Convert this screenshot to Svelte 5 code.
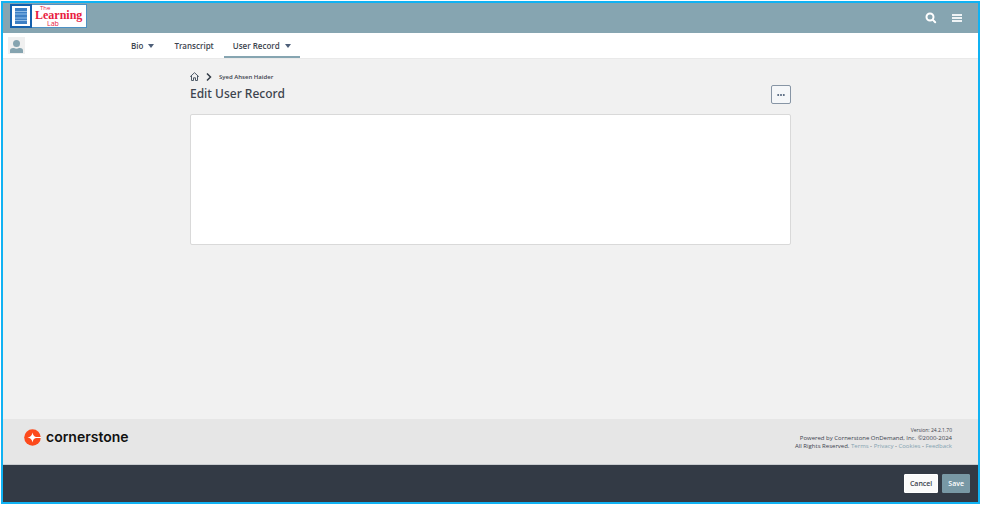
<script>
  const links = ['Terms', 'Privacy', 'Cookies', 'Feedback'];
</script>

<div class="page">
  <header class="top">
    <a class="brand" href="#home" aria-label="The Learning Lab">
      <svg width="78" height="24" viewBox="0 0 78 24">
        <rect x="0.5" y="0.5" width="76" height="23" fill="#fff" stroke="#4d91c4" />
        <rect x="1" y="1" width="20" height="22" fill="#fff" stroke="#1460ad" stroke-width="2" />
        <rect x="5" y="4" width="12" height="16" fill="#3d7fc4" />
        <path d="M5 7.5h12M5 16.5h12" stroke="#8fbbe6" />
        <path d="M5 10h12M5 14h12" stroke="#669fd8" stroke-width="2" />
        <g fill="#e8203f" font-family="'Open Sans', sans-serif">
          <text x="30" y="6" font-size="6">The</text>
          <text x="25" y="15" font-family="'Liberation Serif', serif" font-size="12" font-weight="700">Learning</text>
          <text x="37" y="22" font-size="7">Lab</text>
        </g>
      </svg>
    </a>
    <div class="tools">
      <button class="icon" aria-label="Search">
        <svg width="12" height="12" viewBox="0 0 12 12" fill="none" stroke="#fff" stroke-width="2">
          <circle cx="5" cy="5" r="3.5" /><path d="M7.6 7.6l2.600 2.600" stroke-linecap="round" />
        </svg>
      </button>
      <button class="icon" aria-label="Menu">
        <svg width="10" height="10" viewBox="0 0 10 10" stroke="#eef3f5" stroke-width="2">
          <path d="M0 2h10M0 5h10M0 8h10" />
        </svg>
      </button>
    </div>
  </header>

  <nav class="nav">
    <svg class="avatar" width="17" height="17" viewBox="0 0 17 17">
      <rect width="17" height="17" fill="#f0f0f0" />
      <circle cx="8.5" cy="6.5" r="3.5" fill="#86a4b0" />
      <path d="M2 16v-2.5q0-2.5 3-2.5h1q2.500 1.500 5 0h1q3 0 3 2.500V16z" fill="#86a4b0" />
    </svg>
    <div class="tabs">
      <a href="#bio">Bio <svg width="6" height="4" viewBox="0 0 6 4"><path d="M0 0h6L3 4z" /></svg></a>
      <a href="#transcript">Transcript</a>
      <a href="#record" class="active" aria-current="page">User Record <svg width="6" height="4" viewBox="0 0 6 4"><path d="M0 0h6L3 4z" /></svg></a>
    </div>
  </nav>

  <main>
    <div class="content">
      <div class="crumbs">
        <a href="#home" aria-label="Home">
          <svg width="9" height="9" viewBox="0 0 9 9" fill="none" stroke="#4d5967">
            <path d="M0.200 4.700L4.500 0.700l4.300 4M1.500 4v4.500h2V5.800h2v2.700h2V4" />
          </svg>
        </a>
        <svg width="6" height="8" viewBox="0 0 6 8" fill="none" stroke="#333c47" stroke-width="1.500"><path d="M1 0.500L4.500 4 1 7.500" /></svg>
        <span>Syed Ahsen Haider</span>
      </div>
      <div class="title">
        <h1>Edit User Record</h1>
        <button class="more" aria-label="More actions">
          <svg width="8" height="2" viewBox="0 0 8 2" fill="#4b5f78"><circle cx="1.200" cy="1" r="1" /><circle cx="4" cy="1" r="1" /><circle cx="6.800" cy="1" r="1" /></svg>
        </button>
      </div>
      <section class="card" aria-label="User record"></section>
    </div>
  </main>

  <footer>
    <div class="corner">
      <svg width="17" height="17" viewBox="0 0 17 17">
        <circle cx="8.500" cy="8.500" r="8.300" fill="#fc4a1c" />
        <path d="M8.500 3.500Q9.200 7.500 12 7.900H17v1.200H12Q9.200 9.500 8.500 13.500Q7.800 9.200 3.500 8.500Q7.800 7.800 8.500 3.500z" fill="#fff" />
      </svg>
      <span>cornerstone</span>
    </div>
    <div class="legal">
      <small>Version: 24.2.1.70</small>
      <span>Powered by Cornerstone OnDemand, Inc. ©2000-2024</span>
      <span>All Rights Reserved. {#each links as link, i}{#if i}{' - '}{/if}<a href="#{link}">{link}</a>{/each}</span>
    </div>
  </footer>

  <div class="actions">
    <button class="cancel">Cancel</button>
    <button class="save">Save</button>
  </div>
</div>

<style>
  :global(body) { background: #fff; }
  .page {
    box-sizing: border-box;
    min-height: calc(100vh - 2px);
    margin: 1px;
    border: 2px solid #10b2f3;
    display: flex;
    flex-direction: column;
    background: #f1f1f1;
    color: #3c434d;
    font-family: "Open Sans", "Noto Sans", sans-serif;
    font-size: 8px;
  }
  :global(#app) { display: flow-root; }
  a { color: inherit; text-decoration: none; }
  svg { display: block; flex: none; }
  button { font: inherit; cursor: pointer; box-sizing: border-box; }
  .top {
    height: 30px;
    box-sizing: border-box;
    padding: 0 16px 0 7px;
    display: flex;
    align-items: center;
    justify-content: space-between;
    background: #86a5b1;
  }
  .brand { padding-bottom: 4px; }
  .tools { display: flex; align-items: center; gap: 15px; }
  .icon { border: 0; padding: 0; background: none; }
  .nav {
    height: 25px;
    display: flex;
    align-items: center;
    background: #fff;
    border-bottom: 1px solid #e9e9e9;
  }
  .avatar { margin-left: 5px; }
  .tabs { display: flex; height: 100%; margin-left: 96px; }
  .tabs a {
    display: flex;
    align-items: center;
    gap: 5px;
    padding: 2px 10px 0;
    border-bottom: 2px solid transparent;
    font-weight: 600;
  }
  .tabs .active { padding: 2px 9px 0; border-color: #86a5b1; }
  .tabs svg { fill: #4d5e78; }
  main { flex: 1; }
  .content { width: 601px; max-width: 94%; margin: 0 auto; padding-top: 13px; }
  .crumbs {
    display: flex;
    align-items: center;
    gap: 7px;
    height: 9px;
    font-size: 6px;
    font-weight: 600;
  }
  .title { display: flex; justify-content: space-between; align-items: flex-start; height: 33px; }
  h1 { margin: 4px 0 0; font-family: "Noto Sans", sans-serif; font-size: 12px; line-height: 18px; font-weight: 500; }
  .more {
    width: 20px;
    height: 19px;
    margin-top: 4px;
    padding: 0;
    display: grid;
    place-items: center;
    border: 1px solid #8795a5;
    border-radius: 2px;
    background: #f5f7f9;
  }
  .card {
    height: 129px;
    border: 1px solid #d9d9d9;
    border-radius: 2px;
    background: #fff;
  }
  footer {
    height: 46px;
    box-sizing: border-box;
    padding: 7px 26px 0 21px;
    display: flex;
    justify-content: space-between;
    align-items: flex-start;
    background: #e6e6e6;
    border-bottom: 1px solid #c9cccf;
  }
  .corner {
    display: flex;
    align-items: center;
    gap: 5px;
    margin-top: 2px;
    height: 18px;
    color: #111;
    font-family: Inter, sans-serif;
    font-size: 14px;
    font-weight: 600;
  }
  .corner span { padding-bottom: 2px; }
  .legal {
    display: flex;
    flex-direction: column;
    text-align: right;
    font-size: 6px;
    line-height: 8px;
  }
  .legal small { font-size: 5px; }
  .legal a { color: #83a2b0; }
  .actions {
    height: 37px;
    box-sizing: border-box;
    padding: 0 8px;
    display: flex;
    justify-content: flex-end;
    align-items: center;
    gap: 4px;
    background: #333a45;
  }
  .actions button {
    height: 19px;
    padding: 0 5px;
    border: 1px solid #fff;
    border-radius: 1px;
    font-size: 7px;
    font-weight: 600;
    color: #3c434d;
  }
  .actions .cancel { background: #fafafa; }
  .actions .save { border-color: #7898a5; background: #7898a5; color: #fff; }
</style>
